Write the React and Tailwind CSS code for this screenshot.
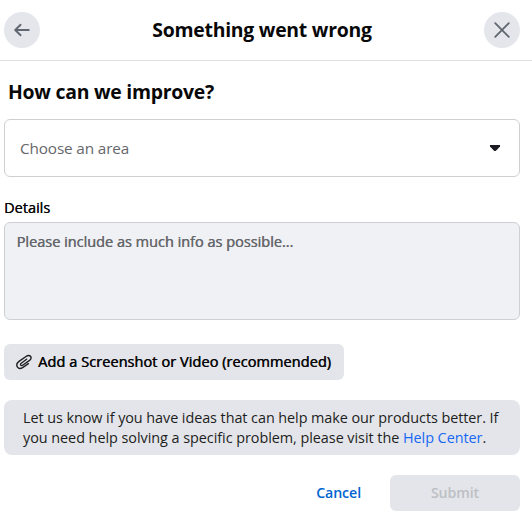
import React from 'react';

const BackIcon = () => (
    <svg width="20" height="20" viewBox="0 0 20 20" fill="none" stroke="#606770" strokeWidth="1.9" strokeLinecap="round" strokeLinejoin="round">
        <path d="M16.8 10H3.4M8.6 4.8L3.2 10L8.6 15.2" />
    </svg>
);

const CloseIcon = () => (
    <svg width="20" height="20" viewBox="0 0 20 20" fill="none" stroke="#606770" strokeWidth="1.8" strokeLinecap="round">
        <path d="M3.2 3.2L16.8 16.8M16.8 3.2L3.2 16.8" />
    </svg>
);

const PaperclipIcon = () => (
    <svg className="shrink-0" width="16" height="16" viewBox="0 0 16 16" fill="none" stroke="#1c1e21" strokeWidth="1.35" strokeLinecap="round" strokeLinejoin="round">
        <path d="M10.6 5.2L5.2 9.3C3.7 10.5 5 12.3 6.6 11.2L13.6 6.4C17 3.8 14 0 10.4 2.2L3 7.4C-1.6 11 2 16.4 6.6 13.6L12.4 9.6" />
    </svg>
);

const App = () => {
    return (
        <div className="h-[525px] w-[532px] overflow-hidden bg-white font-['Open_Sans','Noto_Sans',sans-serif] text-[14.5px] text-[#080809]">
            {/* Header */}
            <header className="flex h-[61px] items-center justify-between border-b border-[#dfe0e4] pr-3 pl-1">
                <button className="flex size-9 items-center justify-center rounded-full bg-[#e4e6eb]" aria-label="Back">
                    <BackIcon />
                </button>
                <h1 className="text-[19.4px] leading-6 font-bold tracking-[-0.25px] whitespace-nowrap">Something went wrong</h1>
                <button className="flex size-9 items-center justify-center rounded-full bg-[#e4e6eb]" aria-label="Close">
                    <CloseIcon />
                </button>
            </header>

            <main className="pr-3 pl-1">
                <h2 className="mt-[19px] ml-1 text-[19.4px] leading-6 font-bold tracking-[-0.25px]">How can we improve?</h2>

                {/* Area select */}
                <div className="mt-[15px] flex h-[58px] items-center justify-between rounded-md border border-[#ced0d4] pr-[18px] pl-[15px]">
                    <span className="text-[15.3px] tracking-[-0.13px] text-[#65676b]">Choose an area</span>
                    <svg width="12" height="6" viewBox="0 0 12 6" fill="#1c1b24">
                        <path d="M1 0H11V1.5L7.2 5.5Q6 6.5 4.8 5.5L1 1.5Z" />
                    </svg>
                </div>

                {/* Details */}
                <label className="mt-[21px] block leading-5 [text-shadow:0.3px_0_currentColor]">Details</label>
                <div className="mt-1 h-[98px] rounded-md border border-[#ced0d4] bg-[#f0f1f5] px-[11.5px] py-[9px] leading-5 text-[#65676b] [text-shadow:0.4px_0_currentColor]">
                    Please include as much info as possible...
                </div>

                <button className="mt-6 flex h-9 w-[340px] items-center gap-[6px] rounded-md bg-[#e4e5ea] pl-3 tracking-[0.07px] whitespace-nowrap [text-shadow:0.5px_0_currentColor]">
                    <PaperclipIcon />
                    Add a Screenshot or Video (recommended)
                </button>

                <div className="mt-5 h-[55px] rounded-lg bg-[#e4e5ea] pt-[8px] pl-[19px] text-[14.4px] leading-5 tracking-[-0.06px] whitespace-nowrap text-[#1c1e21]">
                    <p>Let us know if you have ideas that can help make our products better. If</p>
                    <p className="tracking-[-0.04px]">
                        you need help solving a specific problem, please visit the{' '}
                        <a className="text-[#1668f5]">Help Center</a>.
                    </p>
                </div>

                {/* Actions */}
                <div className="mt-5 flex h-9 justify-end gap-[29px] text-[14.2px] font-semibold tracking-[-0.1px]">
                    <button className="text-[#0064d1]">Cancel</button>
                    <button className="w-[130px] rounded-md bg-[#e4e5ea] text-[#bcc0c4]">Submit</button>
                </div>
            </main>
        </div>
    );
};

export default App;
